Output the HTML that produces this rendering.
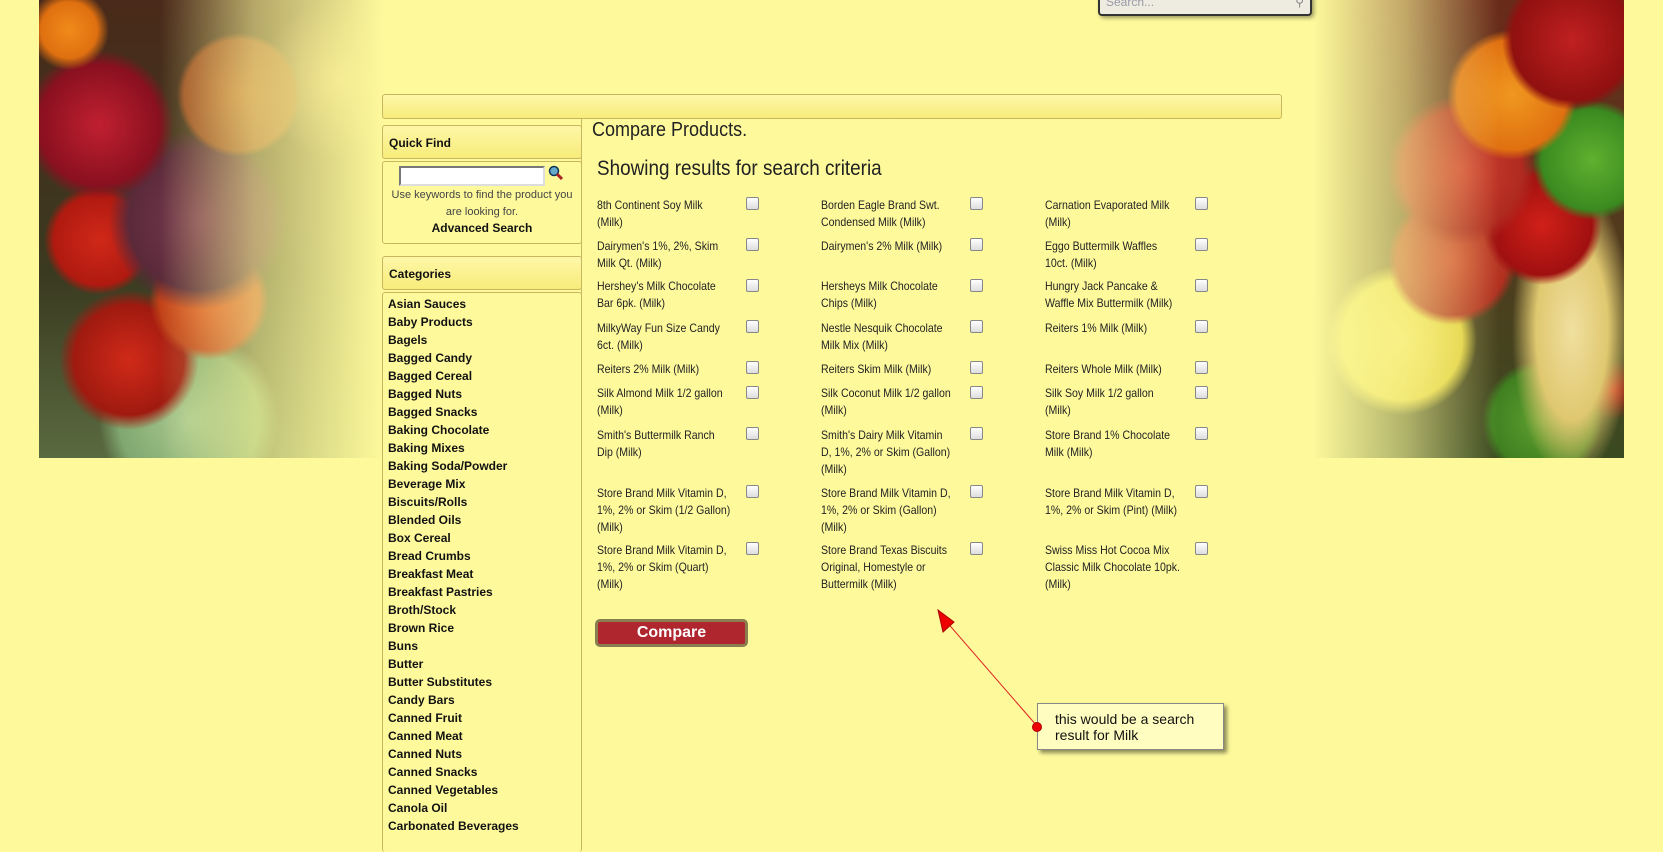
<!DOCTYPE html>
<html><head><meta charset="utf-8">
<style>
*{margin:0;padding:0;box-sizing:border-box}
body{width:1663px;height:825px;overflow:hidden;background:#fefa9c;font-family:"Liberation Sans",sans-serif;position:relative}
.abs{position:absolute}
#limg{left:39px;top:0;width:346px;height:458px;
background:
linear-gradient(90deg,rgba(254,250,156,0) 0%,rgba(254,250,156,0) 35%,rgba(254,250,156,.6) 62%,#fefa9c 100%),
radial-gradient(circle at 30px 30px,#f08a1a 0,#e07010 28px,transparent 40px),
radial-gradient(circle at 200px 95px,#b4622a 0,#9a4a20 55px,transparent 62px),
radial-gradient(circle at 60px 125px,#c02030 0,#8a1020 60px,transparent 75px),
radial-gradient(circle at 160px 220px,#7a3a50 0,#5a2a3a 70px,transparent 90px),
radial-gradient(circle at 60px 240px,#d02818 0,#b01a10 45px,transparent 55px),
radial-gradient(circle at 170px 300px,#e05a20 0,#c04018 50px,transparent 60px),
radial-gradient(circle at 90px 360px,#d02a18 0,#a01a10 55px,transparent 70px),
radial-gradient(circle at 150px 420px,#a8c890 0,#80a870 70px,transparent 90px),
radial-gradient(circle at 300px 80px,#c09060 0,transparent 80px),
linear-gradient(180deg,#4a2a1a,#3a3a20 60%,#5a6a40);}
#rimg{left:1312px;top:0;width:312px;height:458px;
background:
linear-gradient(270deg,rgba(254,250,156,0) 0%,rgba(254,250,156,0) 40%,rgba(254,250,156,.6) 70%,#fefa9c 100%),
radial-gradient(circle at 260px 40px,#c02020 0,#901010 60px,transparent 70px),
radial-gradient(circle at 200px 95px,#f09820 0,#e07010 55px,transparent 65px),
radial-gradient(circle at 280px 160px,#60b030 0,#3a8a20 50px,transparent 60px),
radial-gradient(circle at 150px 170px,#d04030 0,#b02a20 60px,transparent 75px),
radial-gradient(circle at 230px 225px,#d02018 0,#a01010 50px,transparent 60px),
radial-gradient(circle at 140px 260px,#d04a30 0,#b03020 55px,transparent 65px),
radial-gradient(ellipse 60px 150px at 260px 330px,#f0e0a0 0,#e0c870 60%,transparent 100%),
radial-gradient(circle at 90px 340px,#f0e060 0,#e0d040 60px,transparent 75px),
radial-gradient(circle at 230px 420px,#60a030 0,#408020 50px,transparent 60px),
radial-gradient(circle at 300px 390px,#d02018 0,transparent 30px),
linear-gradient(180deg,#6a2a1a,#3a4a20);}
#search{left:1098px;top:-6px;width:214px;height:22px;background:#eeece0;border:2px solid #333;border-top:none;border-radius:0 0 4px 4px;box-shadow:2px 2px 4px rgba(0,0,0,.4);font-size:12px;color:#99a;padding:0 6px;line-height:16px}
.bar{background:linear-gradient(#fff7a8,#f7ec7a);border:1px solid #c9b760;border-radius:3px}
.box{background:#fefa9c;border:1px solid #c9b760;border-radius:3px}
.hd{font-weight:bold;font-size:12px;color:#111;padding-left:6px}
.cat{left:388px;font-weight:bold;font-size:12px;color:#111;line-height:18px}
.item{font-size:12px;line-height:17px;color:#222;white-space:nowrap;transform:scaleX(0.88);transform-origin:0 0}
.cb{width:13px;height:13px;border:1px solid #888;background:linear-gradient(#fff,#ddd);border-radius:2px}
.cp{transform:scaleX(0.9);transform-origin:0 0}
</style></head><body>
<div id="limg" class="abs"></div>
<div id="rimg" class="abs"></div>
<div id="search" class="abs">Search...<span style="float:right;color:#888">&#9906;</span></div>

<div class="abs bar" style="left:382px;top:94px;width:900px;height:25px"></div>

<div class="abs bar hd" style="left:382px;top:125px;width:200px;height:34px;line-height:34px">Quick Find</div>
<div class="abs box" style="left:382px;top:161px;width:200px;height:83px"></div>
<div class="abs" style="left:399px;top:166px;width:146px;height:20px;background:#fff;border:2px solid #777;border-right-color:#ddd;border-bottom-color:#ddd"></div>
<svg class="abs" style="left:548px;top:165px" width="16" height="16"><circle cx="6" cy="6" r="4.5" fill="#6ac" stroke="#135" stroke-width="1.5"/><path d="M9 9l5 5" stroke="#a22" stroke-width="3"/></svg>
<div class="abs" style="left:382px;top:187px;width:200px;text-align:center;font-size:11px;color:#444;line-height:17px">Use keywords to find the product you<br>are looking for.</div>
<div class="abs" style="left:382px;top:221px;width:200px;text-align:center;font-size:12px;font-weight:bold;color:#111">Advanced Search</div>

<div class="abs bar hd" style="left:382px;top:256px;width:200px;height:34px;line-height:34px">Categories</div>
<div class="abs box" style="left:382px;top:292px;width:200px;height:560px;border-bottom:none"></div>
<div class="abs cat" style="top:295px">Asian Sauces<br>Baby Products<br>Bagels<br>Bagged Candy<br>Bagged Cereal<br>Bagged Nuts<br>Bagged Snacks<br>Baking Chocolate<br>Baking Mixes<br>Baking Soda/Powder<br>Beverage Mix<br>Biscuits/Rolls<br>Blended Oils<br>Box Cereal<br>Bread Crumbs<br>Breakfast Meat<br>Breakfast Pastries<br>Broth/Stock<br>Brown Rice<br>Buns<br>Butter<br>Butter Substitutes<br>Candy Bars<br>Canned Fruit<br>Canned Meat<br>Canned Nuts<br>Canned Snacks<br>Canned Vegetables<br>Canola Oil<br>Carbonated Beverages</div>

<div class="abs" style="left:581px;top:119px;width:1px;height:720px;background:#c9b760"></div>
<div class="abs cp" style="left:592px;top:119px;font-size:20px;color:#222">Compare Products.</div>
<div class="abs cp" style="left:597px;top:157px;font-size:21px;color:#222">Showing results for search criteria</div>

<div class="abs item" style="left:597px;top:197px">8th Continent Soy Milk<br>(Milk)</div>
<div class="abs item" style="left:821px;top:197px">Borden Eagle Brand Swt.<br>Condensed Milk (Milk)</div>
<div class="abs item" style="left:1045px;top:197px">Carnation Evaporated Milk<br>(Milk)</div>
<div class="abs item" style="left:597px;top:238px">Dairymen's 1%, 2%, Skim<br>Milk Qt. (Milk)</div>
<div class="abs item" style="left:821px;top:238px">Dairymen's 2% Milk (Milk)</div>
<div class="abs item" style="left:1045px;top:238px">Eggo Buttermilk Waffles<br>10ct. (Milk)</div>
<div class="abs item" style="left:597px;top:278px">Hershey's Milk Chocolate<br>Bar 6pk. (Milk)</div>
<div class="abs item" style="left:821px;top:278px">Hersheys Milk Chocolate<br>Chips (Milk)</div>
<div class="abs item" style="left:1045px;top:278px">Hungry Jack Pancake &amp;<br>Waffle Mix Buttermilk (Milk)</div>
<div class="abs item" style="left:597px;top:320px">MilkyWay Fun Size Candy<br>6ct. (Milk)</div>
<div class="abs item" style="left:821px;top:320px">Nestle Nesquik Chocolate<br>Milk Mix (Milk)</div>
<div class="abs item" style="left:1045px;top:320px">Reiters 1% Milk (Milk)</div>
<div class="abs item" style="left:597px;top:361px">Reiters 2% Milk (Milk)</div>
<div class="abs item" style="left:821px;top:361px">Reiters Skim Milk (Milk)</div>
<div class="abs item" style="left:1045px;top:361px">Reiters Whole Milk (Milk)</div>
<div class="abs item" style="left:597px;top:385px">Silk Almond Milk 1/2 gallon<br>(Milk)</div>
<div class="abs item" style="left:821px;top:385px">Silk Coconut Milk 1/2 gallon<br>(Milk)</div>
<div class="abs item" style="left:1045px;top:385px">Silk Soy Milk 1/2 gallon<br>(Milk)</div>
<div class="abs item" style="left:597px;top:427px">Smith's Buttermilk Ranch<br>Dip (Milk)</div>
<div class="abs item" style="left:821px;top:427px">Smith's Dairy Milk Vitamin<br>D, 1%, 2% or Skim (Gallon)<br>(Milk)</div>
<div class="abs item" style="left:1045px;top:427px">Store Brand 1% Chocolate<br>Milk (Milk)</div>
<div class="abs item" style="left:597px;top:485px">Store Brand Milk Vitamin D,<br>1%, 2% or Skim (1/2 Gallon)<br>(Milk)</div>
<div class="abs item" style="left:821px;top:485px">Store Brand Milk Vitamin D,<br>1%, 2% or Skim (Gallon)<br>(Milk)</div>
<div class="abs item" style="left:1045px;top:485px">Store Brand Milk Vitamin D,<br>1%, 2% or Skim (Pint) (Milk)</div>
<div class="abs item" style="left:597px;top:542px">Store Brand Milk Vitamin D,<br>1%, 2% or Skim (Quart)<br>(Milk)</div>
<div class="abs item" style="left:821px;top:542px">Store Brand Texas Biscuits<br>Original, Homestyle or<br>Buttermilk (Milk)</div>
<div class="abs item" style="left:1045px;top:542px">Swiss Miss Hot Cocoa Mix<br>Classic Milk Chocolate 10pk.<br>(Milk)</div>

<div class="abs cb" style="left:746px;top:197px"></div><div class="abs cb" style="left:970px;top:197px"></div><div class="abs cb" style="left:1195px;top:197px"></div>
<div class="abs cb" style="left:746px;top:238px"></div><div class="abs cb" style="left:970px;top:238px"></div><div class="abs cb" style="left:1195px;top:238px"></div>
<div class="abs cb" style="left:746px;top:279px"></div><div class="abs cb" style="left:970px;top:279px"></div><div class="abs cb" style="left:1195px;top:279px"></div>
<div class="abs cb" style="left:746px;top:320px"></div><div class="abs cb" style="left:970px;top:320px"></div><div class="abs cb" style="left:1195px;top:320px"></div>
<div class="abs cb" style="left:746px;top:361px"></div><div class="abs cb" style="left:970px;top:361px"></div><div class="abs cb" style="left:1195px;top:361px"></div>
<div class="abs cb" style="left:746px;top:386px"></div><div class="abs cb" style="left:970px;top:386px"></div><div class="abs cb" style="left:1195px;top:386px"></div>
<div class="abs cb" style="left:746px;top:427px"></div><div class="abs cb" style="left:970px;top:427px"></div><div class="abs cb" style="left:1195px;top:427px"></div>
<div class="abs cb" style="left:746px;top:485px"></div><div class="abs cb" style="left:970px;top:485px"></div><div class="abs cb" style="left:1195px;top:485px"></div>
<div class="abs cb" style="left:746px;top:542px"></div><div class="abs cb" style="left:970px;top:542px"></div><div class="abs cb" style="left:1195px;top:542px"></div>

<div class="abs" style="left:595px;top:619px;width:153px;height:28px;background:#b0262e;border:3px solid #8a7d50;border-radius:5px;color:#fff;font-weight:bold;font-size:16px;text-align:center;line-height:21px">Compare</div>

<svg class="abs" style="left:0;top:0" width="1663" height="825">
<line x1="1037" y1="726" x2="945" y2="620" stroke="#d22" stroke-width="1"/>
<polygon points="938,610 954,622 943,632" fill="#e00" stroke="#a00" stroke-width="1"/>
</svg>
<div class="abs" style="left:1037px;top:703px;width:187px;height:47px;background:#fffdc0;border:1px solid #888;box-shadow:3px 3px 4px rgba(0,0,0,.45);font-size:14px;color:#111;line-height:16px;padding:7px 0 0 17px">this would be a search<br>result for Milk</div>
<div class="abs" style="left:1032px;top:722px;width:10px;height:10px;border-radius:50%;background:#e00;border:1px solid #a00"></div>
</body></html>
